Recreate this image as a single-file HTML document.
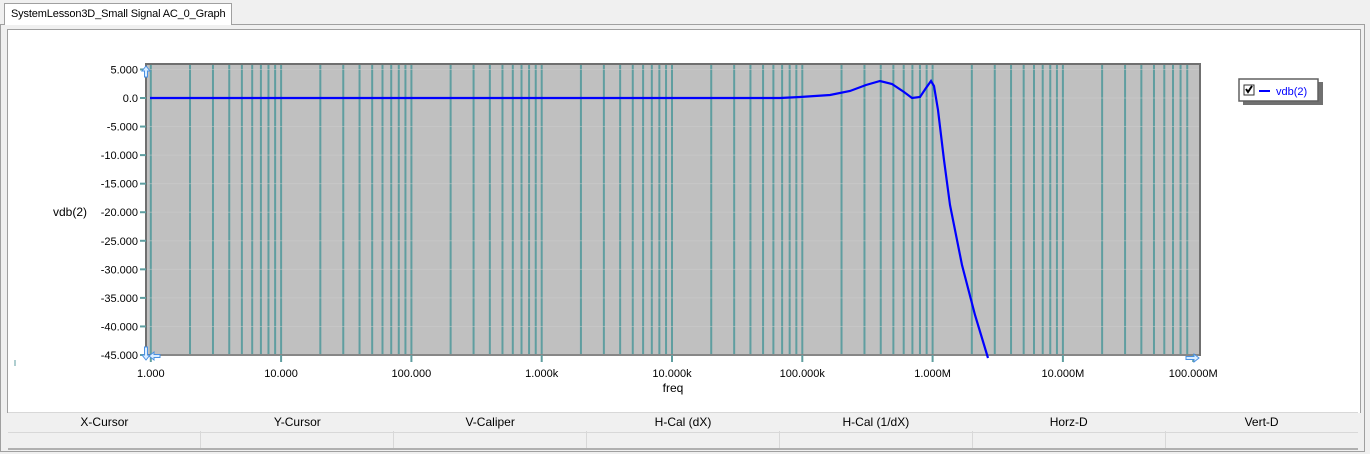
<!DOCTYPE html>
<html><head><meta charset="utf-8"><style>
html,body{margin:0;padding:0;width:1370px;height:454px;overflow:hidden;background:#f0f0f0;font-family:"Liberation Sans",Arial,sans-serif;}
#frame{position:absolute;left:0;top:24px;width:1365px;height:428px;border:1px solid #a0a0a0;background:#f0f0f0;box-sizing:border-box;}
#tab{position:absolute;left:4px;top:3px;width:228px;height:22px;background:#fff;border:1px solid #a0a0a0;border-bottom:none;box-sizing:border-box;font-size:11px;line-height:20px;padding-left:6px;z-index:2;white-space:nowrap;overflow:hidden;letter-spacing:-0.15px;}
#white{position:absolute;left:7px;top:29px;width:1354px;height:384px;background:#fff;border-left:1px solid #a0a0a0;border-top:1px solid #a0a0a0;border-right:1px solid #a0a0a0;box-sizing:border-box;}
svg{position:absolute;left:0;top:0;}
.cols{position:absolute;left:8px;width:1350px;display:flex;font-size:12px;}
.cols div{flex:1;text-align:center;box-sizing:border-box;}
#hdr{top:412px;height:19px;line-height:19px;border-top:1px solid #d8d8d8;border-bottom:1px solid #d8d8d8;}
#row{top:431px;height:17px;border-bottom:2px solid #b0b0b0;}
#row div{border-right:1px solid #d8d8d8;}
</style></head><body>
<div id="frame"></div>
<div id="tab">SystemLesson3D_Small Signal AC_0_Graph</div>
<div id="white"></div>
<svg width="1370" height="454" id="s" font-family="Liberation Sans, Arial, sans-serif" font-size="11"></svg>
<div class="cols" id="hdr"><div>X-Cursor</div><div>Y-Cursor</div><div>V-Caliper</div><div>H-Cal (dX)</div><div>H-Cal (1/dX)</div><div>Horz-D</div><div>Vert-D</div></div>
<div class="cols" id="row"><div></div><div></div><div></div><div></div><div></div><div></div><div style="border-right:none"></div></div>
<script>
var s=document.getElementById('s'),h='';
var X=function(f){return 150.8+130.3*Math.log10(f);};
var Y=function(d){return 98+d*(-257/45);};
h+='<rect x="146" y="64" width="1054" height="291" fill="#c0c0c0" stroke="#707070" stroke-width="2"/>';
for(var dec=0;dec<8;dec++){for(var m=1;m<=9;m++){var f=m*Math.pow(10,dec);var x=X(f);if(x<148||x>1199)continue;
h+='<line x1="'+x+'" y1="65" x2="'+x+'" y2="354" stroke="#5f9ea0" stroke-width="2"/>';}}
for(var d=5;d>=-45;d-=5){var y=Y(d);h+='<line x1="147" y1="'+y+'" x2="1199" y2="'+y+'" stroke="#cdcdcd" stroke-width="1" opacity="0.5"/>';
h+='<line x1="140" y1="'+y+'" x2="146" y2="'+y+'" stroke="#5f9ea0" stroke-width="2"/>';
var t=d==0?'0.0':(d.toFixed(3));h+='<text x="138" y="'+(y+4)+'" text-anchor="end">'+t+'</text>';}
var lb=['1.000','10.000','100.000','1.000k','10.000k','100.000k','1.000M','10.000M','100.000M'];
for(var i=0;i<9;i++){var x=X(Math.pow(10,i));h+='<line x1="'+x+'" y1="355" x2="'+x+'" y2="362" stroke="#5f9ea0" stroke-width="2"/><text x="'+x+'" y="377" text-anchor="middle">'+lb[i]+'</text>';}
h+='<text x="673" y="392" text-anchor="middle" font-size="12">freq</text>';
h+='<text x="70" y="216" text-anchor="middle" font-size="12">vdb(2)</text>';
h+='<line x1="15" y1="360" x2="15" y2="366" stroke="#5f9ea0"/>';
h+='<polyline fill="none" stroke="#0000ff" stroke-width="2.2" points="150,98 780,98 800,97 830,95 850,91 866,85 880,81 892,84 904,92 912,98 920,97 926,88 931,81 934,86 938,110 944,160 950,205 962,265 975,315 988,358"/>';
h+='<path d="M146,66 l-4,5 h2.5 v6 h3 v-6 h2.5z" fill="#dbeeff" stroke="#4a90e2"/>';
h+='<path d="M146,360 l-4,-5 h2.5 v-8 h3 v8 h2.5z" fill="#dbeeff" stroke="#4a90e2"/>';
h+='<path d="M149,356 l5,-4 v2.5 h6 v3 h-6 v2.5z" fill="#dbeeff" stroke="#4a90e2"/>';
h+='<path d="M1199,358 l-5,-4 v2.5 h-8 v3 h8 v2.5z" fill="#dbeeff" stroke="#4a90e2"/>';
h+='<rect x="1243" y="82" width="80" height="23" fill="#707070"/><rect x="1239" y="79" width="79" height="22" fill="#fff" stroke="#606060" stroke-width="1.5"/>';
h+='<rect x="1244" y="85" width="10" height="10" fill="#fff" stroke="#333"/><path d="M1246,89 l2,3 l4,-6" fill="none" stroke="#000" stroke-width="2"/>';
h+='<line x1="1259" y1="91" x2="1270" y2="91" stroke="#0000ff" stroke-width="2"/><text x="1276" y="95" fill="#0000ff">vdb(2)</text>';
s.innerHTML=h;
</script>
</body></html>
